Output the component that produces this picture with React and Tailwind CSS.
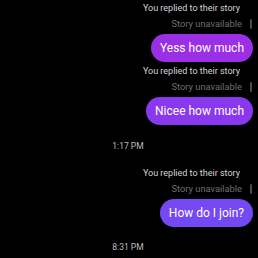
const Reply = ({ text, color }) => (
  <div className="flex flex-col items-end">
    <div className="h-[12px] leading-[12px] text-[9px] text-[#d4d4d4] pr-[18px]">
      You replied to their story
    </div>
    <div className="mt-[4px] flex items-center gap-[8px] pr-[6px]">
      <span className="h-[12px] leading-[12px] text-[9.3px] text-[#6f6f6f]">Story unavailable</span>
      <span className="w-[2px] h-[10px] bg-[#4a4a4a] rounded-full" />
    </div>
    <div
      className={`mt-[4px] mr-[5px] h-[28px] px-[9px] flex items-center rounded-full text-white text-[12px] ${color}`}
    >
      {text}
    </div>
  </div>
);

const Time = ({ children }) => (
  <div className="flex justify-center pr-[2px] h-[12px] leading-[12px] text-[8.5px] text-[#bdbdbd]">
    {children}
  </div>
);

export default function App() {
  return (
    <div
      className="w-[258px] h-[258px] bg-black overflow-hidden pt-[2px]"
      style={{ fontFamily: "Roboto, 'Noto Sans', sans-serif" }}
    >
      <Reply text="Yess how much" color="bg-[#9a2fe6]" />
      <div className="mt-[3px]">
        <Reply text="Nicee how much" color="bg-[#8a38ee]" />
      </div>
      <div className="mt-[15px]">
        <Time>1:17 PM</Time>
      </div>
      <div className="mt-[15px]">
        <Reply text="How do I join?" color="bg-[#7448f3]" />
      </div>
      <div className="mt-[14px]">
        <Time>8:31 PM</Time>
      </div>
    </div>
  );
}
